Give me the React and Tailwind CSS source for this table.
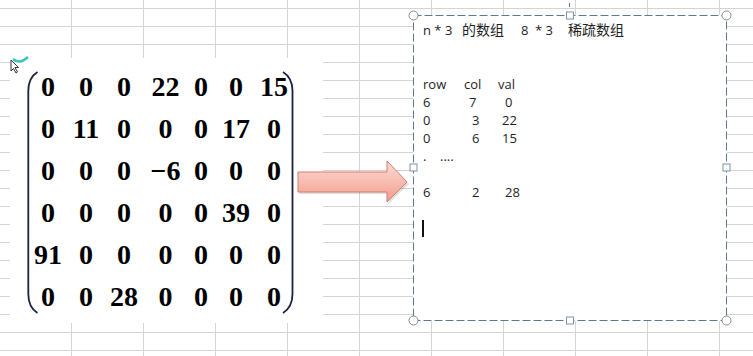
import React from "react";

const matrix = [
  ["0", "0", "0", "22", "0", "0", "15"],
  ["0", "11", "0", "0", "0", "17", "0"],
  ["0", "0", "0", "\u22126", "0", "0", "0"],
  ["0", "0", "0", "0", "0", "39", "0"],
  ["91", "0", "0", "0", "0", "0", "0"],
  ["0", "0", "28", "0", "0", "0", "0"],
];

// each line of the text box: [text, width] pairs, last one takes the rest
const lines = [
  null,
  null,
  [["row", "w-[41px]"], ["col", "w-[34px]"], ["val", ""]],
  [["6", "w-[46px]"], ["7", "w-[36px]"], ["0", ""]],
  [["0", "w-[49px]"], ["3", "w-[30px]"], ["22", ""]],
  [["0", "w-[49px]"], ["6", "w-[30px]"], ["15", ""]],
  [[".", "w-[17px]"], ["....", ""]],
  null,
  [["6", "w-[49px]"], ["2", "w-[33px]"], ["28", ""]],
  null,
];

function SheetGrid() {
  const cells = Array.from({ length: 11 * 21 });
  return (
    <div className="grid grid-cols-[repeat(11,72px)] auto-rows-[18px] -mt-[9px]">
      {cells.map((_, i) => (
        <div key={i} className="border-r border-b border-[#d4d4d4]" />
      ))}
    </div>
  );
}

function MatrixPicture() {
  return (
    <div className="absolute left-[10px] top-[58px] w-[313px] h-[265px] bg-white">
      <svg className="absolute inset-0" width="313" height="265">
        <path
          d="M27.5 14 C21 18 18.3 24 18.3 33 V236 C18.3 245 21 251 27.5 255"
          fill="none"
          stroke="#1c2340"
          strokeWidth="1.8"
        />
        <path
          d="M273 14 C279.5 18 282.5 24 282.5 33 V236 C282.5 245 279.5 251 273 255"
          fill="none"
          stroke="#1c2340"
          strokeWidth="1.8"
        />
      </svg>
      <div className="relative pl-[19px] pt-[8px] grid grid-cols-[38px_38px_38px_45px_26px_44px_32px] auto-rows-[42px] font-['Liberation_Serif',serif] font-bold text-[28px] leading-[42px] text-black">
        {matrix.flat().map((n, i) => (
          <div key={i} className="text-center whitespace-nowrap flex justify-center">
            {n}
          </div>
        ))}
      </div>
    </div>
  );
}

function Arrow() {
  return (
    <svg className="absolute left-[296px] top-[159px]" width="116" height="48">
      <defs>
        <linearGradient id="arrowFill" x1="0" y1="0" x2="0" y2="1">
          <stop offset="0" stopColor="#fddad3" />
          <stop offset="0.5" stopColor="#f8bdb2" />
          <stop offset="1" stopColor="#f29b8b" />
        </linearGradient>
      </defs>
      <polygon
        points="3.5,15 92.5,15 92.5,4 113,25 92.5,45 92.5,35 3.5,35"
        fill="#000"
        opacity="0.12"
      />
      <polygon
        points="2,13 91,13 91,2 111,23 91,43 91,33 2,33"
        fill="url(#arrowFill)"
        stroke="#cf7f73"
        strokeWidth="1"
      />
    </svg>
  );
}

function CursorMark() {
  return (
    <svg className="absolute left-[8px] top-[54px]" width="24" height="24">
      <path d="M5 5 Q11 11 20 3" fill="none" stroke="#3cc4bd" strokeWidth="2.5" />
      <path d="M3 6 L3 17 L5.5 14.5 L8 19 L9.5 18 L7 13.5 L10.5 13.5 Z" fill="#fff" stroke="#333" strokeWidth="1" />
    </svg>
  );
}

function TextBox() {
  return (
    <div className="absolute left-[413px] top-[15px] w-[314px] h-[306px] bg-white">
      <svg className="absolute inset-0 overflow-visible" width="314" height="306">
        <line x1="156.5" y1="-12" x2="156.5" y2="-8" stroke="#5f7890" strokeWidth="1" />
        <rect x="0.5" y="0.5" width="313" height="305" fill="none" stroke="#5f7890" strokeWidth="1" strokeDasharray="8 3" />
        {[
          [0.5, 0.5],
          [313.5, 0.5],
          [0.5, 305.5],
          [313.5, 305.5],
        ].map(([cx, cy], i) => (
          <circle key={i} cx={cx} cy={cy} r="4.5" fill="#fff" stroke="#8a8a8a" strokeWidth="1" />
        ))}
        {[
          [157, 0.5],
          [0.5, 152.5],
          [313.5, 152.5],
          [157, 305.5],
        ].map(([cx, cy], i) => (
          <rect key={i} x={cx - 3.5} y={cy - 3.5} width="7" height="7" fill="#fff" stroke="#7d93a8" strokeWidth="1" />
        ))}
      </svg>
      <div className="relative pl-[10px] pt-[6px] font-['Open_Sans','Noto_Sans_CJK_SC',sans-serif] text-[13px] leading-[18px] text-[#1e1e1e]">
        <div className="flex h-[18px] whitespace-pre">
          <span className="w-[39px]">n * 3</span>
          <span className="w-[59px] text-[14px]">的数组</span>
          <span className="w-[14px]">8</span>
          <span className="w-[33px]">* 3</span>
          <span className="text-[14px]">稀疏数组</span>
        </div>
        {lines.map((line, i) => (
          <div key={i} className="flex h-[18px] whitespace-pre">
            {line &&
              line.map(([t, w], j) => (
                <span key={j} className={w}>
                  {t}
                </span>
              ))}
          </div>
        ))}
        <div className="h-[18px] flex items-center">
          <span className="ml-[-1px] w-[2px] h-[17px] bg-[#111]" />
        </div>
      </div>
    </div>
  );
}

export default function App() {
  return (
    <div className="relative w-[753px] h-[356px] overflow-hidden bg-white">
      <SheetGrid />
      <MatrixPicture />
      <CursorMark />
      <Arrow />
      <TextBox />
    </div>
  );
}
